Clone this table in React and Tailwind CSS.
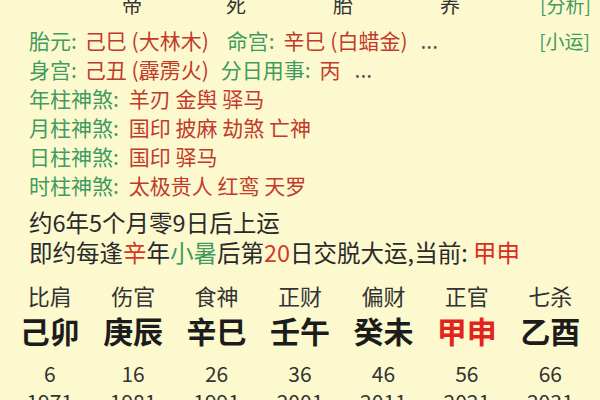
const G = "text-[#3f9b5f]";
const R = "text-[#c23a2c]";

const pillars = [
  { god: "比肩", gz: "己卯", age: 6, year: 1971 },
  { god: "伤官", gz: "庚辰", age: 16, year: 1981 },
  { god: "食神", gz: "辛巳", age: 26, year: 1991 },
  { god: "正财", gz: "壬午", age: 36, year: 2001 },
  { god: "偏财", gz: "癸未", age: 46, year: 2011 },
  { god: "正官", gz: "甲申", age: 56, year: 2021, now: true },
  { god: "七杀", gz: "乙酉", age: 66, year: 2031 },
];

const shensha = [
  ["年柱神煞:", "羊刃 金舆 驿马"],
  ["月柱神煞:", "国印 披麻 劫煞 亡神"],
  ["日柱神煞:", "国印 驿马"],
  ["时柱神煞:", "太极贵人 红鸾 天罗"],
];

export default function App() {
  return (
    <div
      className="w-[600px] h-[400px] overflow-hidden bg-[#fdf9cf] text-[#2a2a2a]"
      style={{ fontFamily: '"Noto Sans CJK SC", "Noto Sans", sans-serif' }}
    >
      {/* 上方表格最后一行 */}
      <div className="flex items-center h-[30px] leading-[30px] mt-[-10px] text-[20px] text-[#333]">
        <span className="w-[122px]" />
        <span className="w-[104px]">帝</span>
        <span className="w-[107px]">死</span>
        <span className="w-[107px]">胎</span>
        <span className="w-[100px]">养</span>
        <span className={`text-[19px] ${G}`}>[分析]</span>
      </div>

      <div className="pl-[29px] pr-[10px] text-[21px] leading-[29px]">
        <div className="flex items-center h-[29px] mt-[6px]">
          <span className={G}>胎元:</span>
          <span className={`ml-[8px] ${R}`}>己巳 (大林木)</span>
          <span className={`ml-[18px] ${G}`}>命宫:</span>
          <span className={`ml-[9px] ${R}`}>辛巳 (白蜡金)</span>
          <span className="ml-[13px] text-[#555]">...</span>
          <span className={`ml-auto text-[19px] ${G}`}>[小运]</span>
        </div>
        <div className="flex items-center h-[29px]">
          <span className={G}>身宫:</span>
          <span className={`ml-[8px] ${R}`}>己丑 (霹雳火)</span>
          <span className={`ml-[12px] ${G}`}>分日用事:</span>
          <span className={`ml-[9px] ${R}`}>丙</span>
          <span className="ml-[14px] text-[#555]">...</span>
        </div>
        {shensha.map(([k, v]) => (
          <div key={k} className="flex items-center h-[29px]">
            <span className={G}>{k}</span>
            <span className={`ml-[10px] ${R}`}>{v}</span>
          </div>
        ))}

        <div className="flex items-center h-[30px] leading-[30px] mt-[7px] text-[23.5px]">
          约6年5个月零9日后上运
        </div>
        <div className="flex items-center h-[30px] leading-[30px] text-[23.5px] whitespace-pre">
          <span>即约每逢</span>
          <span className="text-[#d23a2a]">辛</span>
          <span>年</span>
          <span className="text-[#3f9b5f]">小暑</span>
          <span>后第</span>
          <span className="text-[#d23a2a]">20</span>
          <span>日交脱大运,当前: </span>
          <span className="text-[#dc2b22]">甲申</span>
        </div>
      </div>

      <div className="grid grid-cols-7 px-[8px] mt-[13px] text-center">
        {pillars.map((p) => (
          <div key={p.gz} className="flex flex-col items-center">
            <div className="h-[30px] leading-[30px] text-[22px] text-[#333]">{p.god}</div>
            <div
              className={`h-[40px] leading-[40px] text-[30px] font-bold ${
                p.now ? "text-[#e3231c]" : "text-[#1c1c1c]"
              }`}
            >
              {p.gz}
            </div>
            <div className="h-[30px] leading-[30px] mt-[8px] text-[21px] text-[#333]">{p.age}</div>
            <div className="h-[30px] leading-[30px] mt-[-2px] text-[21px] text-[#333]">{p.year}</div>
          </div>
        ))}
      </div>
    </div>
  );
}
